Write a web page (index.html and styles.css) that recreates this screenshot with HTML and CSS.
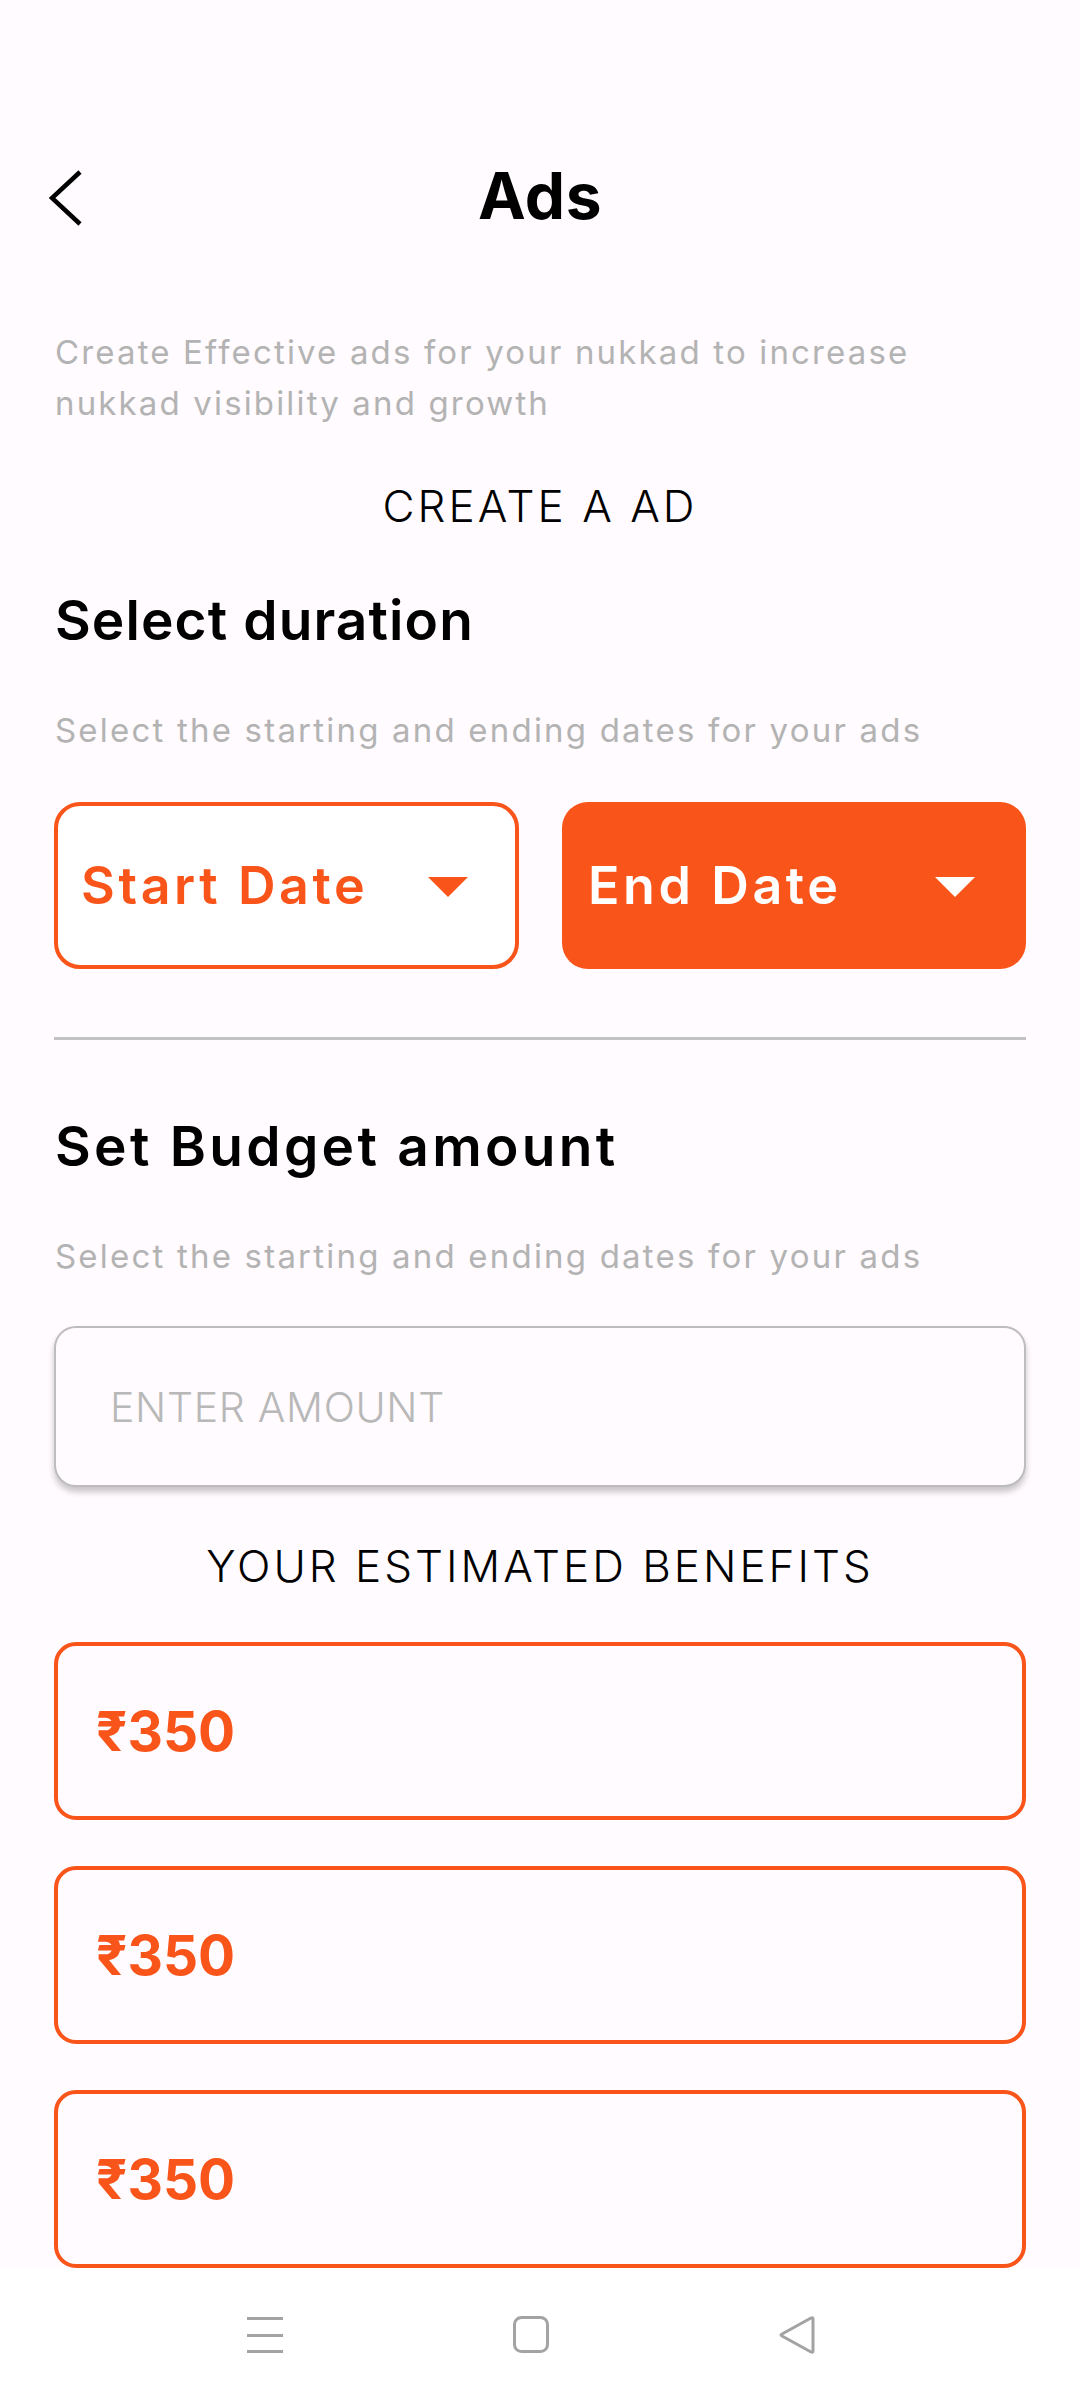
FILE: index.html
```html
<!DOCTYPE html>
<html lang="en">
<head>
<meta charset="utf-8">
<title>Ads</title>
<link rel="stylesheet" href="styles.css">
</head>
<body>
<div class="screen">
  <div class="status-bar"></div>
  <header class="app-bar">
    <svg class="back" width="40" height="60" viewBox="0 0 40 60" aria-hidden="true">
      <polyline points="31,4 3,30 31,56" fill="none" stroke="#000" stroke-width="4.5" stroke-linecap="butt" stroke-linejoin="miter"/>
    </svg>
    <h1 class="title">Ads</h1>
  </header>

  <main class="content">
    <p class="intro">Create Effective ads for your nukkad to increase<br>nukkad visibility and growth</p>
    <h2 class="caps-title create">CREATE A AD</h2>

    <h3 class="section-title duration">Select duration</h3>
    <p class="hint">Select the starting and ending dates for your ads</p>

    <div class="date-row">
      <button class="date-btn outline">
        <span class="date-label">Start Date</span>
        <svg class="caret" width="40" height="20" viewBox="0 0 40 20" aria-hidden="true"><polygon points="0,0 40,0 20,20" fill="#f95419"/></svg>
      </button>
      <button class="date-btn filled">
        <span class="date-label">End Date</span>
        <svg class="caret" width="40" height="20" viewBox="0 0 40 20" aria-hidden="true"><polygon points="0,0 40,0 20,20" fill="#ffffff"/></svg>
      </button>
    </div>

    <hr class="divider">

    <h3 class="section-title budget">Set Budget amount</h3>
    <p class="hint">Select the starting and ending dates for your ads</p>

    <div class="amount-input">
      <span class="placeholder">ENTER AMOUNT</span>
    </div>

    <h2 class="caps-title benefits">YOUR ESTIMATED BENEFITS</h2>

    <div class="benefit-list">
      <div class="benefit"><span class="price">₹350</span></div>
      <div class="benefit"><span class="price">₹350</span></div>
      <div class="benefit"><span class="price">₹350</span></div>
    </div>
  </main>

  <nav class="nav-bar">
    <svg class="nav-icon" width="40" height="40" viewBox="0 0 40 40" aria-hidden="true">
      <rect x="2" y="1" width="36" height="3" fill="#a3a3a3"/>
      <rect x="2" y="18" width="36" height="3" fill="#a3a3a3"/>
      <rect x="2" y="34" width="36" height="3" fill="#a3a3a3"/>
    </svg>
    <svg class="nav-icon" width="40" height="40" viewBox="0 0 40 40" aria-hidden="true">
      <rect x="3.5" y="1.5" width="33" height="34" rx="7" fill="none" stroke="#a3a3a3" stroke-width="3"/>
    </svg>
    <svg class="nav-icon" width="40" height="40" viewBox="0 0 40 40" aria-hidden="true">
      <path d="M36 3 L36 35 Q36 37 34 36 L5 20 Q3 19 5 18 L34 2 Q36 1 36 3 Z" fill="none" stroke="#a3a3a3" stroke-width="3" stroke-linejoin="round"/>
    </svg>
  </nav>
</div>
</body>
</html>
```
FILE: styles.css
```css
* {
  box-sizing: border-box;
}

html, body {
  margin: 0;
  padding: 0;
  background: #fffbfe;
}

body {
  font-family: "Inter", "Roboto", "Noto Sans", sans-serif;
  color: #000;
  width: 1080px;
  height: 2400px;
  overflow: hidden;
}

.screen {
  width: 1080px;
  height: 2400px;
  display: flex;
  flex-direction: column;
}

.status-bar {
  height: 136px;
  flex: none;
}

.app-bar {
  height: 120px;
  flex: none;
  position: relative;
  display: flex;
  align-items: center;
  justify-content: center;
}

.back {
  position: absolute;
  left: 49px;
  top: 32px;
}

.title {
  margin: 0;
  font-size: 64px;
  line-height: 120px;
  font-weight: 700;
  letter-spacing: 0.5px;
}

.content {
  flex: 1;
  padding: 0 54px;
  display: flex;
  flex-direction: column;
}

.intro {
  margin: 71px 0 0 1px;
  font-size: 33px;
  line-height: 51px;
  color: #b3b3b3;
  font-weight: 400;
  letter-spacing: 2.15px;
}

.caps-title {
  margin: 0;
  text-align: center;
  font-weight: 300;
  font-size: 44px;
  line-height: 60px;
  letter-spacing: 3px;
}

.create {
  margin-top: 47px;
}

.section-title {
  margin: 0 0 0 1px;
  font-size: 55px;
  line-height: 70px;
  font-weight: 600;
}

.duration {
  margin-top: 49px;
  letter-spacing: 1.1px;
}

.budget {
  margin-top: 71px;
  letter-spacing: 3.3px;
}

.hint {
  margin: 50px 0 0 1px;
  font-size: 33px;
  line-height: 50px;
  color: #b3b3b3;
  letter-spacing: 2.2px;
}

.date-row {
  margin-top: 47px;
  display: flex;
  gap: 43px;
}

.date-btn {
  flex: 1;
  height: 167px;
  border-radius: 26px;
  display: flex;
  align-items: center;
  justify-content: space-between;
  padding: 0 51px 0 26px;
  font-family: inherit;
  cursor: pointer;
}

.date-btn.outline {
  background: #ffffff;
  border: 4px solid #f95419;
  color: #f95419;
  padding-left: 23px;
  padding-right: 47px;
}

.date-btn.filled {
  background: #f95419;
  border: none;
  color: #ffffff;
}

.date-label {
  font-size: 52px;
  font-weight: 600;
  letter-spacing: 3.6px;
}

.caret {
  display: block;
  margin-top: 2px;
}

.divider {
  margin: 68px 0 0;
  border: none;
  height: 3px;
  background: #c2c2c2;
}

.amount-input {
  margin-top: 45px;
  height: 161px;
  border: 2px solid #bdbdbd;
  border-radius: 22px;
  background: #fffbfe;
  box-shadow: 0 5px 6px rgba(0, 0, 0, 0.22);
  display: flex;
  align-items: center;
  padding-left: 54px;
}

.placeholder {
  font-size: 41px;
  font-weight: 300;
  color: #b8b8b8;
  letter-spacing: 0.7px;
}

.benefits {
  margin-top: 49px;
}

.benefit-list {
  margin-top: 46px;
  display: flex;
  flex-direction: column;
  gap: 46px;
}

.benefit {
  height: 178px;
  border: 4px solid #f95419;
  border-radius: 22px;
  display: flex;
  align-items: center;
  padding-left: 38px;
}

.price {
  font-size: 55px;
  font-weight: 700;
  color: #f95419;
}

.nav-bar {
  flex: none;
  height: 132px;
  background: #ffffff;
  display: flex;
  justify-content: center;
  align-items: flex-start;
  padding: 48px 18px 0 0;
  gap: 226px;
  position: relative;
  z-index: 1;
}

.nav-icon {
  display: block;
}
```
